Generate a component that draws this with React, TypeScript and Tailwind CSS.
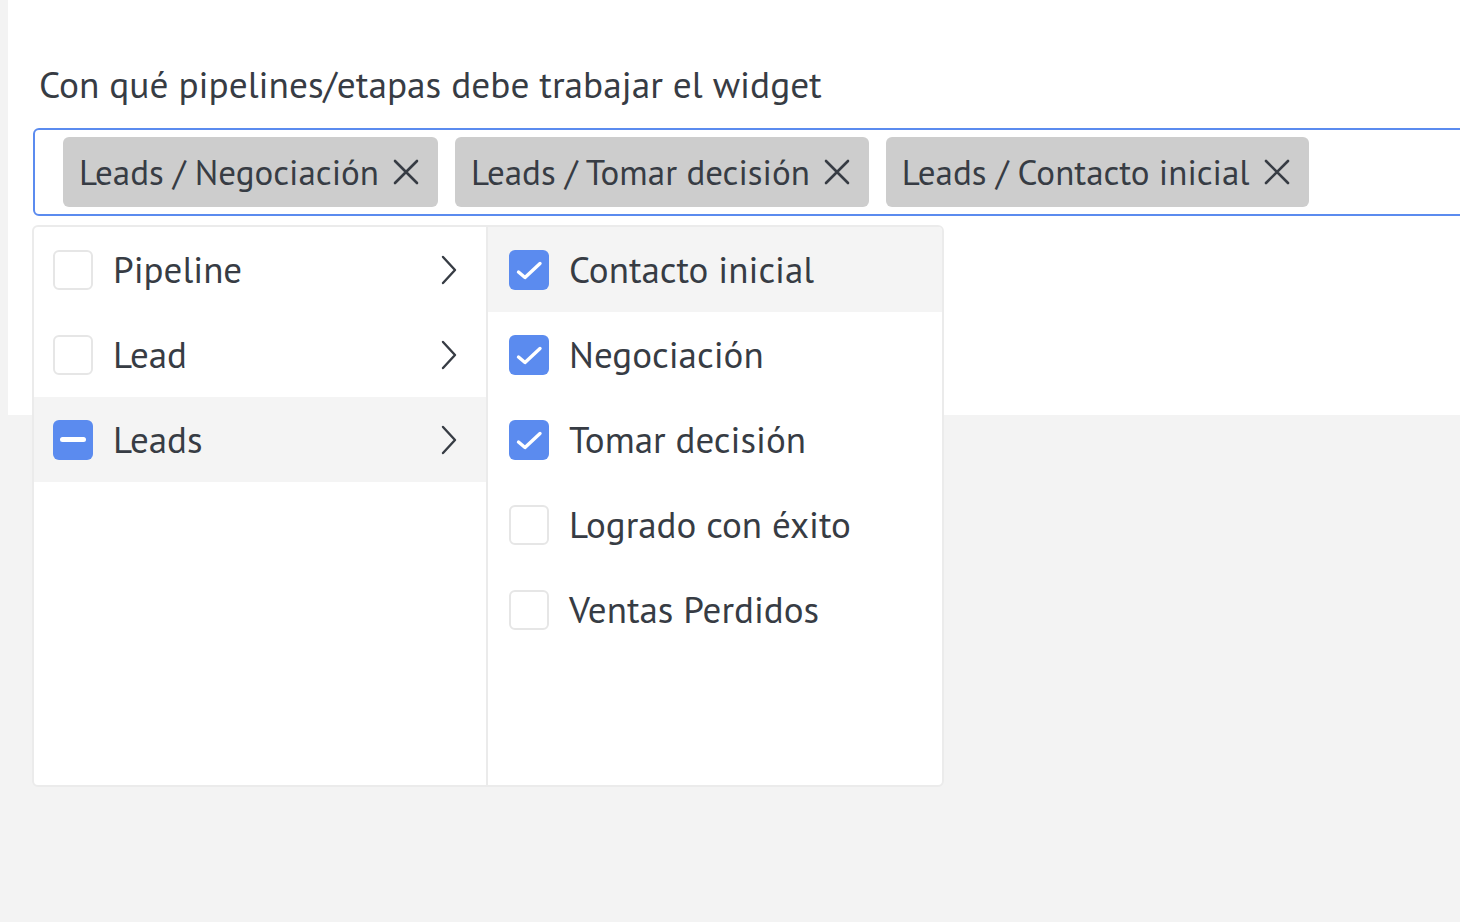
const chips = ['Leads / Negociación', 'Leads / Tomar decisión', 'Leads / Contacto inicial'];

const pipelines = [
  { label: 'Pipeline', state: 'none', active: false },
  { label: 'Lead', state: 'none', active: false },
  { label: 'Leads', state: 'partial', active: true },
];

const stages = [
  { label: 'Contacto inicial', checked: true, hover: true },
  { label: 'Negociación', checked: true, hover: false },
  { label: 'Tomar decisión', checked: true, hover: false },
  { label: 'Logrado con éxito', checked: false, hover: false },
  { label: 'Ventas Perdidos', checked: false, hover: false },
];

function Box({ state }: { state: 'none' | 'checked' | 'partial' }) {
  if (state === 'none') {
    return <span className="h-[40px] w-[40px] shrink-0 rounded-[6px] border-2 border-[#e6e6e6] bg-white" />;
  }
  return (
    <span className="flex h-[40px] w-[40px] shrink-0 items-center justify-center rounded-[6px] bg-[#5b8bef]">
      {state === 'checked' ? (
        <svg width="40" height="40" viewBox="0 0 40 40" fill="none">
          <path d="M9.5 22 L16 27.5 L31 13.5" stroke="white" strokeWidth="3.4" strokeLinecap="round" strokeLinejoin="round" />
        </svg>
      ) : (
        <span className="h-[5px] w-[26px] rounded-full bg-white" />
      )}
    </span>
  );
}

function Cross() {
  return (
    <svg width="26" height="26" viewBox="0 0 26 26" fill="none" className="shrink-0">
      <path d="M2 2 L24 24 M24 2 L2 24" stroke="currentColor" strokeWidth="2.6" strokeLinecap="round" />
    </svg>
  );
}

function Chevron() {
  return (
    <svg width="18" height="30" viewBox="0 0 18 30" fill="none" className="shrink-0">
      <path d="M3 2 L15 15 L3 28" stroke="currentColor" strokeWidth="2.4" strokeLinecap="round" strokeLinejoin="round" />
    </svg>
  );
}

export default function App() {
  return (
    <div
      className="relative h-[922px] w-[1460px] overflow-hidden bg-[#f3f3f3] pl-[8px] text-[#373c44]"
      style={{ fontFamily: '"PT Sans", Lato, "Noto Sans", sans-serif' }}
    >
      <div className="h-[415px] w-[1540px] bg-white pl-[25px] pt-[60px]">
        <div className="ml-[6px] text-[37.3px] leading-[48px]">Con qué pipelines/etapas debe trabajar el widget</div>
        <div className="mt-[20px] flex h-[88px] w-[1500px] items-center gap-[17px] rounded-[6px] border-2 border-[#5b8bef] pl-[28px]">
          {chips.map((chip) => (
            <div key={chip} className="flex h-[70px] items-center gap-[14px] rounded-[6px] bg-[#cdcdcd] pl-[16px] pr-[19px] text-[35px]">
              <span>{chip}</span>
              <Cross />
            </div>
          ))}
        </div>
      </div>

      <div className="absolute left-[32px] top-[225px] flex h-[562px] w-[912px] overflow-hidden rounded-[6px] border-2 border-[#ebebeb] bg-white text-[37px]">
        <div className="w-[454px] border-r-2 border-[#ebebeb]">
          {pipelines.map((p) => (
            <div
              key={p.label}
              className={`flex h-[85px] items-center gap-[20px] pl-[19px] pr-[28px] ${p.active ? 'bg-[#f4f4f4]' : ''}`}
            >
              <Box state={p.state as 'none' | 'partial'} />
              <span className="flex-1">{p.label}</span>
              <Chevron />
            </div>
          ))}
        </div>
        <div className="flex-1">
          {stages.map((s) => (
            <div key={s.label} className={`flex h-[85px] items-center gap-[20px] pl-[21px] ${s.hover ? 'bg-[#f4f4f4]' : ''}`}>
              <Box state={s.checked ? 'checked' : 'none'} />
              <span>{s.label}</span>
            </div>
          ))}
        </div>
      </div>
    </div>
  );
}
